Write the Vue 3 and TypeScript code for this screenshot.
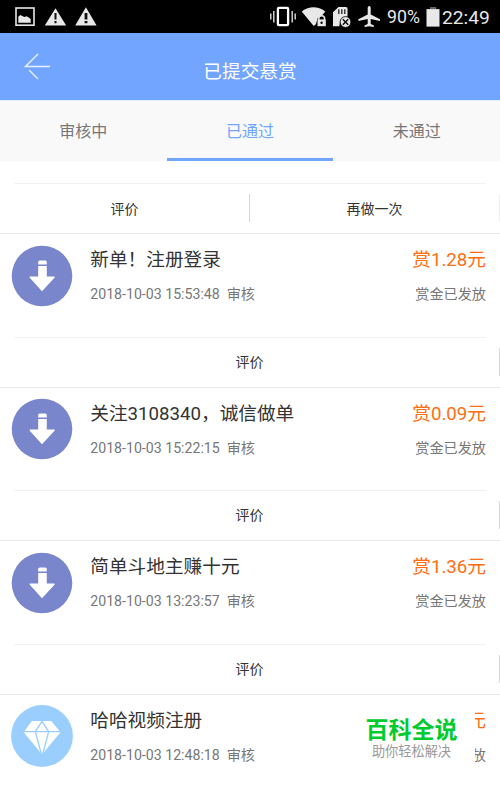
<script setup lang="ts">
interface Task {
  title: string
  time: string
  reward: string
  icon: 'download' | 'diamond'
  reviewable: boolean
}

const tabs: string[] = ['审核中', '已通过', '未通过']
const activeTab = 1

const tasks: Task[] = [
  { title: '新单！注册登录', time: '2018-10-03 15:53:48', reward: '赏1.28元', icon: 'download', reviewable: true },
  { title: '关注3108340，诚信做单', time: '2018-10-03 15:22:15', reward: '赏0.09元', icon: 'download', reviewable: true },
  { title: '简单斗地主赚十元', time: '2018-10-03 13:23:57', reward: '赏1.36元', icon: 'download', reviewable: true },
  { title: '哈哈视频注册', time: '2018-10-03 12:48:18', reward: '元', icon: 'diamond', reviewable: false },
]
</script>

<template>
  <div class="screen">
    <div class="status">
      <svg class="status-icons" width="82" height="33" viewBox="15 0 82 33">
        <rect x="16" y="8" width="18" height="17.2" fill="none" stroke="#e8e8e8" stroke-width="1.6" />
        <path d="M18.3 22.7v-6l2-1.6 2 .8 2 1.2 2.2-.9 2.2 1.4 2 1.4v3.7z" fill="#e8e8e8" />
        <path d="M55.5 8.3 66.2 25.4H44.8zM85.9 7.3 96.6 25.4H75.2z" fill="#e8e8e8" />
        <path d="M54.5 13h2v6.6h-2zM54.5 21h2v2.2h-2zM84.6 13h2.8v6.6h-2.8zM84.6 21h2.8v2.3h-2.8z" fill="#111" />
      </svg>
      <div class="status-right">
        <svg width="112" height="33" viewBox="269 0 112 33">
          <rect x="277.9" y="7.8" width="10.2" height="17.4" rx="1" fill="none" stroke="#fff" stroke-width="2.3" />
          <path d="M270.8 13.5v6M273.8 11v11.5M292.2 11v11.5M295.2 13.5v6" fill="none" stroke="#ddd" stroke-width="1.4" />
          <path d="M301.7 11.4Q313.5 3.2 325.3 11.4L321.6 16.1Q317.3 16.7 317 20.5L315.9 24.3 313.7 26z" fill="#e8e8e8" />
          <path d="M318.8 20v-1.3a2.9 2.9 0 0 1 5.8 0V20" fill="none" stroke="#e8e8e8" stroke-width="1.5" />
          <rect x="317.5" y="19.4" width="8.3" height="6.8" fill="#e8e8e8" />
          <circle cx="321.6" cy="22.7" r="1.2" fill="#111" />
          <path d="M338.5 7h7.5q1.5 0 1.5 1.5v8.2q-7.7-.7-8.2 9.6H333V12.3z" fill="#e8e8e8" />
          <path d="M338.8 9.2v4.8M341.8 9.2v4.8M344.8 9.2v4.8" stroke="#222" stroke-width="1.3" />
          <circle cx="345.5" cy="22" r="5.4" fill="#e8e8e8" stroke="#000" stroke-width=".8" />
          <path d="m342.8 19.3 5.4 5.4m0-5.4-5.4 5.4" stroke="#111" stroke-width="1.5" />
          <path d="M369.2 6c1 0 1.5 1 1.5 2v6.4l9.3 4.8v1.7l-9.3-2v5.1l3.2 1.6V27l-4.7-.7-4.7.7v-1.4l3.2-1.6v-5.1l-9.3 2v-1.7l9.3-4.8V8c0-1 .5-2 1.5-2z" fill="#e8e8e8" />
        </svg>
        <span class="percent">90%</span>
        <svg width="16" height="33" viewBox="425 0 16 33">
          <rect x="430" y="7" width="6.2" height="2.2" fill="#666" />
          <rect x="426.5" y="9.1" width="13" height="17.5" fill="#e8e8e8" />
        </svg>
        <span class="clock">22:49</span>
      </div>
    </div>

    <header class="header">
      <svg class="back" width="28" height="28" viewBox="24 52 28 28">
        <path d="M50 66.5H25.5L38 54M29 70 38 79" fill="none" stroke="#fff" stroke-opacity=".85" stroke-width="1.35" />
      </svg>
      <h1 class="page-title">已提交悬赏</h1>
    </header>

    <nav class="tabs">
      <div v-for="(tab, i) in tabs" :key="tab" class="tab" :class="{ active: i === activeTab }">{{ tab }}</div>
    </nav>

    <main class="list">
      <div class="actions first">
        <div class="action">评价</div>
        <div class="action">再做一次</div>
      </div>
      <article v-for="task in tasks" :key="task.time" class="item">
        <div class="body">
          <svg v-if="task.icon === 'download'" class="avatar" viewBox="0 0 62 62">
            <circle cx="31" cy="31" r="30.3" fill="#7986cb" />
            <path d="M27.2 17q0-1.6 1.6-1.6h5.4q1.6 0 1.6 1.6v2.6h-8.6zM27.2 20.9h8.6v10.7h7.3q1.2 0 .4 1.2L31.7 45.4q-.7 1-1.4 0L18.8 32.8q-.8-1.2.4-1.2h8z" fill="#fff" />
          </svg>
          <svg v-else class="avatar" viewBox="0 0 62 62">
            <circle cx="31" cy="31" r="30.9" fill="#99ceff" />
            <path d="M20.8 15.9h19.4L49.5 27.3 31 49.6 12.7 27.3z" fill="#fff" />
            <path d="M12.5 26.7h37M24.3 26.7 31 16.3l6.7 10.4M24.3 26.7 30.3 49M37.7 26.7 31.7 49" fill="none" stroke="#99ceff" stroke-width="1.3" />
          </svg>
          <div class="content">
            <div class="row">
              <span class="title">{{ task.title }}</span>
              <span class="reward">{{ task.reward }}</span>
            </div>
            <div class="row meta">
              <span class="time">{{ task.time }}&nbsp; 审核</span>
              <span>{{ task.reviewable ? '赏金已发放' : '放' }}</span>
            </div>
          </div>
        </div>
        <div v-if="task.reviewable" class="actions">
          <div class="action">评价</div>
        </div>
      </article>
    </main>

    <aside class="brand">
      <strong>百科全说</strong>
      <span>助你轻松解决</span>
    </aside>
  </div>
</template>

<style>
body {
  overflow: hidden;
}
</style>

<style scoped>
.screen {
  position: relative;
  width: 500px;
  height: 790px;
  overflow: hidden;
  background: #fff;
  font-family: Roboto, 'Noto Sans CJK SC', sans-serif;
  color: #333;
}
.status {
  display: flex;
  justify-content: space-between;
  height: 33px;
  padding: 0 9px 0 15px;
  background: #000;
  color: #e8e8e8;
}
.status-right {
  display: flex;
}
.status span {
  line-height: 35px;
  white-space: nowrap;
}
.status .percent {
  width: 38px;
  padding-left: 6px;
  font-size: 17.7px;
}
.clock {
  width: 49px;
  padding-left: 1px;
  font-size: 19.2px;
}
.header {
  display: grid;
  grid-template-columns: 76px 1fr 76px;
  height: 67px;
  background: #72a5ff;
}
.back {
  margin: 19px 0 0 24px;
}
.page-title {
  margin: 0;
  text-align: center;
  font-size: 18.67px;
  font-weight: 400;
  line-height: 78px;
  color: #fff;
}
.tabs {
  display: grid;
  grid-template-columns: repeat(3, 1fr);
  box-sizing: border-box;
  height: 61px;
  border-top: 1px solid #e6eefc;
  background: #f9f9f9;
}
.tab {
  box-sizing: border-box;
  height: 60px;
  text-align: center;
  font-size: 16px;
  line-height: 62px;
  color: #777;
}
.tab.active {
  border-bottom: 3px solid #72a5ff;
  color: #72a5ff;
}
.list {
  padding-top: 22px;
}
.actions {
  position: relative;
  display: flex;
  align-items: center;
  box-sizing: border-box;
  height: 51px;
  border-bottom: 1px solid #e8e8e8;
}
.actions::before {
  content: '';
  position: absolute;
  top: 0;
  left: 14px;
  right: 14px;
  height: 1px;
  background: #f0f0f0;
}
.action {
  flex: 1;
  box-sizing: border-box;
  height: 28px;
  border-right: 1px solid #d8d8d8;
  text-align: center;
  font-size: 14px;
  line-height: 28px;
}
.first .action {
  line-height: 30px;
}
.first .action:last-child {
  border-right-color: #eee;
}
.item {
  height: 153.6px;
}
.body {
  display: flex;
  box-sizing: border-box;
  height: 102.6px;
  padding: 11px 14px 0 10.7px;
}
.avatar {
  flex: none;
  width: 62px;
  height: 62px;
  margin-top: -0.3px;
}
.content {
  flex: 1;
  padding-left: 17.6px;
}
.row {
  display: flex;
  justify-content: space-between;
  height: 30px;
  font-size: 18.67px;
  line-height: 30px;
  white-space: nowrap;
}
.reward {
  color: #ff6d12;
}
.meta {
  height: 24px;
  padding-top: 7px;
  font-size: 14.15px;
  line-height: 24px;
  color: #777;
}
.brand {
  position: absolute;
  left: 340px;
  top: 699px;
  display: flex;
  flex-direction: column;
  align-items: center;
  box-sizing: border-box;
  width: 135px;
  height: 91px;
  padding: 16px 0 0 8px;
  background: #fff;
  white-space: nowrap;
}
.brand strong {
  font-size: 23px;
  font-weight: 700;
  line-height: 32px;
  color: #00cb2e;
}
.brand span {
  margin-top: -2px;
  font-size: 13.2px;
  line-height: 14px;
  color: #999;
}
</style>
